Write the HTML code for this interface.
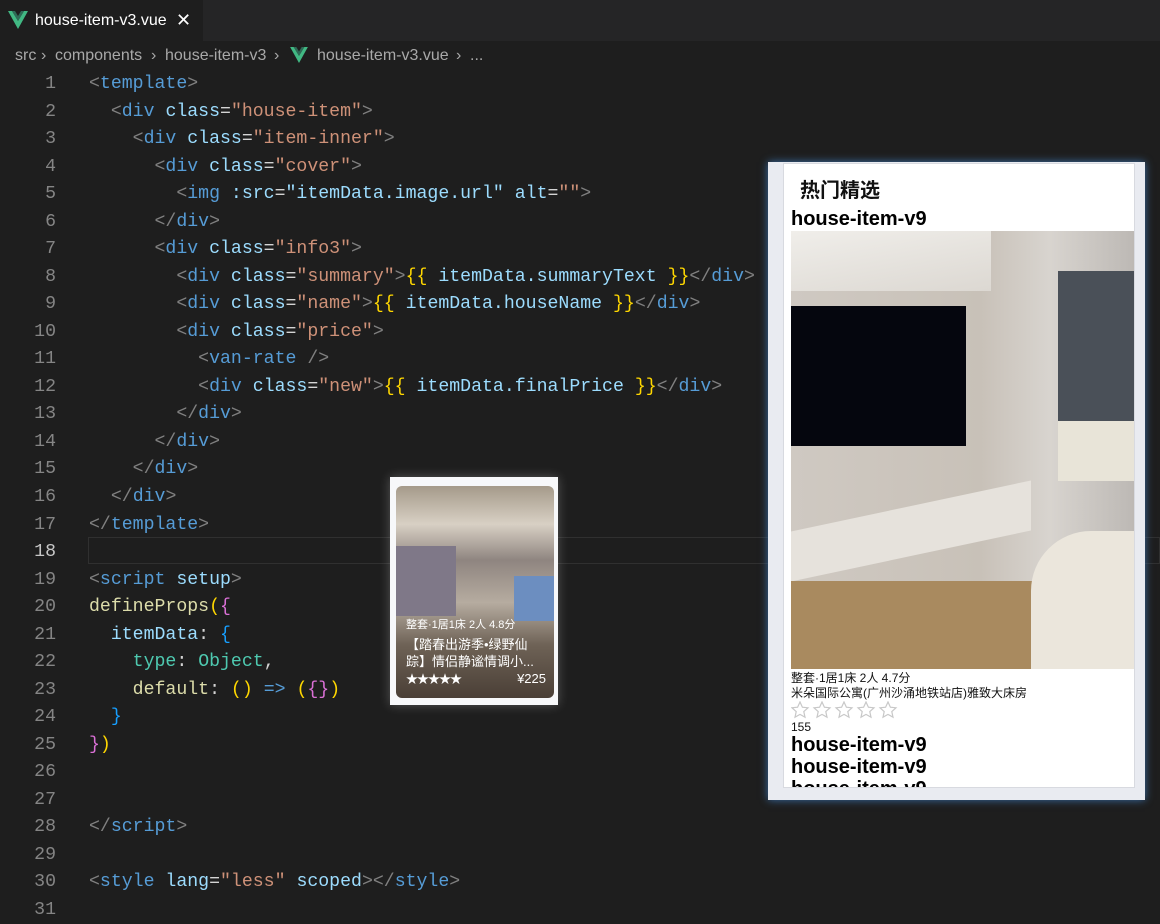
<!DOCTYPE html>
<html><head><meta charset="utf-8">
<style>
*{margin:0;padding:0;box-sizing:border-box}
body{width:1160px;height:918px;background:#1e1e1e;overflow:hidden;position:relative;font-family:"Liberation Sans","Noto Sans CJK SC",sans-serif}
.tabbar{position:absolute;left:0;top:0;width:1160px;height:41px;background:#252526}
.tab{position:absolute;left:0;top:0;width:203px;height:41px;background:#1e1e1e;color:#fff;font-size:16px;line-height:41px;padding-left:35px}
.cr{position:absolute;top:44px;color:#a9a9a9;font-size:16px;line-height:24px;white-space:pre}
.code{position:absolute;left:0;top:71px;font-family:"Liberation Mono",monospace;font-size:18.2px}
.ln{position:absolute;left:0;width:56px;text-align:right;color:#858585;height:27.53px;line-height:27.53px}
.cl{position:absolute;left:89px;white-space:pre;height:27.53px;line-height:27.53px;color:#d4d4d4}
.g{color:#808080}.t{color:#569cd6}.a{color:#9cdcfe}.s{color:#ce9178}.y{color:#ffd700}.f{color:#dcdcaa}.o{color:#4ec9b0}.p{color:#da70d6}.b{color:#179fff}
</style></head><body>
<div class="tabbar"><div class="tab">
<svg style="position:absolute;left:8px;top:11px" width="20" height="18" viewBox="0 0 20 18"><path d="M0 0h4l6 10 6-10h4L10 18z" fill="#41b883"/><path d="M4 0h3l3 5 3-5h3l-6 10z" fill="#2e6b57"/></svg>
house-item-v3.vue<span style="position:absolute;left:176px;top:0;font-size:18px">✕</span></div></div>
<span class="cr" style="left:15px">src</span><span class="cr" style="left:41px">›</span>
<span class="cr" style="left:55px">components</span><span class="cr" style="left:151px">›</span>
<span class="cr" style="left:165px">house-item-v3</span><span class="cr" style="left:274px">›</span>
<svg style="position:absolute;left:290px;top:47px" width="18" height="16" viewBox="0 0 20 18"><path d="M0 0h4l6 10 6-10h4L10 18z" fill="#41b883"/><path d="M4 0h3l3 5 3-5h3l-6 10z" fill="#2e6b57"/></svg>
<span class="cr" style="left:317px">house-item-v3.vue</span><span class="cr" style="left:456px">›</span><span class="cr" style="left:470px">...</span>
<div style="position:absolute;left:88px;top:537px;width:1072px;height:27px;border:1px solid #303030"></div>
<div class="code">
<div class="ln" style="top:0">1</div><div class="cl" style="top:0"><span class="g">&lt;</span><span class="t">template</span><span class="g">&gt;</span></div>
<div class="ln" style="top:27.5px">2</div><div class="cl" style="top:27.5px">  <span class="g">&lt;</span><span class="t">div</span> <span class="a">class</span>=<span class="s">"house-item"</span><span class="g">&gt;</span></div>
<div class="ln" style="top:55px">3</div><div class="cl" style="top:55px">    <span class="g">&lt;</span><span class="t">div</span> <span class="a">class</span>=<span class="s">"item-inner"</span><span class="g">&gt;</span></div>
<div class="ln" style="top:82.6px">4</div><div class="cl" style="top:82.6px">      <span class="g">&lt;</span><span class="t">div</span> <span class="a">class</span>=<span class="s">"cover"</span><span class="g">&gt;</span></div>
<div class="ln" style="top:110.1px">5</div><div class="cl" style="top:110.1px">        <span class="g">&lt;</span><span class="t">img</span> <span class="a">:src</span>=<span class="a">"itemData.image.url"</span> <span class="a">alt</span>=<span class="s">""</span><span class="g">&gt;</span></div>
<div class="ln" style="top:137.6px">6</div><div class="cl" style="top:137.6px">      <span class="g">&lt;/</span><span class="t">div</span><span class="g">&gt;</span></div>
<div class="ln" style="top:165.2px">7</div><div class="cl" style="top:165.2px">      <span class="g">&lt;</span><span class="t">div</span> <span class="a">class</span>=<span class="s">"info3"</span><span class="g">&gt;</span></div>
<div class="ln" style="top:192.7px">8</div><div class="cl" style="top:192.7px">        <span class="g">&lt;</span><span class="t">div</span> <span class="a">class</span>=<span class="s">"summary"</span><span class="g">&gt;</span><span class="y">{{</span> <span class="a">itemData.summaryText</span> <span class="y">}}</span><span class="g">&lt;/</span><span class="t">div</span><span class="g">&gt;</span></div>
<div class="ln" style="top:220.2px">9</div><div class="cl" style="top:220.2px">        <span class="g">&lt;</span><span class="t">div</span> <span class="a">class</span>=<span class="s">"name"</span><span class="g">&gt;</span><span class="y">{{</span> <span class="a">itemData.houseName</span> <span class="y">}}</span><span class="g">&lt;/</span><span class="t">div</span><span class="g">&gt;</span></div>
<div class="ln" style="top:247.8px">10</div><div class="cl" style="top:247.8px">        <span class="g">&lt;</span><span class="t">div</span> <span class="a">class</span>=<span class="s">"price"</span><span class="g">&gt;</span></div>
<div class="ln" style="top:275.3px">11</div><div class="cl" style="top:275.3px">          <span class="g">&lt;</span><span class="t">van-rate</span> <span class="g">/&gt;</span></div>
<div class="ln" style="top:302.8px">12</div><div class="cl" style="top:302.8px">          <span class="g">&lt;</span><span class="t">div</span> <span class="a">class</span>=<span class="s">"new"</span><span class="g">&gt;</span><span class="y">{{</span> <span class="a">itemData.finalPrice</span> <span class="y">}}</span><span class="g">&lt;/</span><span class="t">div</span><span class="g">&gt;</span></div>
<div class="ln" style="top:330.4px">13</div><div class="cl" style="top:330.4px">        <span class="g">&lt;/</span><span class="t">div</span><span class="g">&gt;</span></div>
<div class="ln" style="top:357.9px">14</div><div class="cl" style="top:357.9px">      <span class="g">&lt;/</span><span class="t">div</span><span class="g">&gt;</span></div>
<div class="ln" style="top:385.4px">15</div><div class="cl" style="top:385.4px">    <span class="g">&lt;/</span><span class="t">div</span><span class="g">&gt;</span></div>
<div class="ln" style="top:413px">16</div><div class="cl" style="top:413px">  <span class="g">&lt;/</span><span class="t">div</span><span class="g">&gt;</span></div>
<div class="ln" style="top:440.5px">17</div><div class="cl" style="top:440.5px"><span class="g">&lt;/</span><span class="t">template</span><span class="g">&gt;</span></div>
<div class="ln" style="top:468px;color:#c6c6c6">18</div>
<div class="ln" style="top:495.5px">19</div><div class="cl" style="top:495.5px"><span class="g">&lt;</span><span class="t">script</span> <span class="a">setup</span><span class="g">&gt;</span></div>
<div class="ln" style="top:523.1px">20</div><div class="cl" style="top:523.1px"><span class="f">defineProps</span><span class="y">(</span><span class="p">{</span></div>
<div class="ln" style="top:550.6px">21</div><div class="cl" style="top:550.6px">  <span class="a">itemData</span>: <span class="b">{</span></div>
<div class="ln" style="top:578.1px">22</div><div class="cl" style="top:578.1px">    <span style="color:#4ec9b0">type</span>: <span class="o">Object</span>,</div>
<div class="ln" style="top:605.7px">23</div><div class="cl" style="top:605.7px">    <span class="f">default</span>: <span class="y">()</span> <span class="t">=&gt;</span> <span class="y">(</span><span class="p">{}</span><span class="y">)</span></div>
<div class="ln" style="top:633.2px">24</div><div class="cl" style="top:633.2px">  <span class="b">}</span></div>
<div class="ln" style="top:660.7px">25</div><div class="cl" style="top:660.7px"><span class="p">}</span><span class="y">)</span></div>
<div class="ln" style="top:688.3px">26</div>
<div class="ln" style="top:715.8px">27</div>
<div class="ln" style="top:743.3px">28</div><div class="cl" style="top:743.3px"><span class="g">&lt;/</span><span class="t">script</span><span class="g">&gt;</span></div>
<div class="ln" style="top:770.9px">29</div>
<div class="ln" style="top:798.4px">30</div><div class="cl" style="top:798.4px"><span class="g">&lt;</span><span class="t">style</span> <span class="a">lang</span>=<span class="s">"less"</span> <span class="a">scoped</span><span class="g">&gt;&lt;/</span><span class="t">style</span><span class="g">&gt;</span></div>
<div class="ln" style="top:825.9px">31</div>
</div>

<!-- small card -->
<div style="position:absolute;left:390px;top:477px;width:168px;height:228px;background:#f7f8fa;box-shadow:0 0 10px rgba(255,255,255,.25)"></div>
<div style="position:absolute;left:396px;top:486px;width:158px;height:212px;border-radius:6px;overflow:hidden;background:linear-gradient(180deg,#a59a8a 0%,#d8d0c4 18%,#8f8580 35%,#b6aca0 55%,#6e6256 75%,#4a3f36 100%)">
<div style="position:absolute;left:0;top:60px;width:60px;height:70px;background:#7f7888"></div>
<div style="position:absolute;right:0;top:90px;width:40px;height:45px;background:#6c8ec0"></div>
<div style="position:absolute;left:10px;top:130px;color:#fff;font-size:11px">整套·1居1床 2人 4.8分</div>
<div style="position:absolute;left:10px;top:150px;width:140px;color:#fff;font-size:13px;line-height:17px">【踏春出游季•绿野仙踪】情侣静谧情调小...</div>
<div style="position:absolute;left:10px;top:184px;color:#fff;font-size:12px;letter-spacing:-1px">★★★★★</div>
<div style="position:absolute;right:8px;top:185px;color:#fff;font-size:13px">¥225</div>
</div>

<!-- right panel -->
<div style="position:absolute;left:768px;top:162px;width:377px;height:638px;background:#e9ebf1;box-shadow:0 0 8px #3a6ea8"></div>
<div style="position:absolute;left:783px;top:163px;width:352px;height:625px;background:#fff;border:1px solid #d8dae0;overflow:hidden">
<div style="position:absolute;left:16px;top:10px;font-size:20px;font-weight:bold;color:#111">热门精选</div>
<div style="position:absolute;left:7px;top:44px;font-size:20px;font-weight:bold;color:#000">house-item-v9</div>
<div style="position:absolute;left:7px;top:67px;width:345px;height:438px;background:linear-gradient(90deg,#cfc9c2 0%,#c8c1b8 55%,#d8d4cf 75%,#bcb8b4 100%)">
<div style="position:absolute;left:0;top:0;width:200px;height:60px;background:linear-gradient(170deg,#f0eeea,#dcd8d2)"></div>
<div style="position:absolute;left:0;top:75px;width:175px;height:140px;background:#05060e"></div>
<div style="position:absolute;left:267px;top:40px;width:78px;height:150px;background:#4a5058"></div>
<div style="position:absolute;left:267px;top:190px;width:78px;height:60px;background:#e8e4d8"></div>
<div style="position:absolute;left:0;top:275px;width:240px;height:50px;background:#e6e2dc;transform:skewY(-12deg)"></div>
<div style="position:absolute;left:0;top:350px;width:260px;height:88px;background:#a98a5f"></div>
<div style="position:absolute;left:240px;top:300px;width:105px;height:138px;background:#ebe6dc;border-radius:60px 0 0 0"></div>
</div>
<div style="position:absolute;left:7px;top:505px;font-size:12px;color:#111">整套·1居1床 2人 4.7分</div>
<div style="position:absolute;left:7px;top:520px;font-size:12px;color:#111">米朵国际公寓(广州沙涌地铁站店)雅致大床房</div>
<svg style="position:absolute;left:7px;top:537px" width="112" height="18" viewBox="0 0 112 18">
<g fill="none" stroke="#c8c8c8" stroke-width="1.2">
<path id="st" d="M9 1l2.4 5.2 5.6.6-4.2 3.8 1.2 5.6L9 13.4 4 16.2l1.2-5.6L1 6.8l5.6-.6z"/>
<use href="#st" x="22"/><use href="#st" x="44"/><use href="#st" x="66"/><use href="#st" x="88"/>
</g></svg>
<div style="position:absolute;left:7px;top:556px;font-size:12px;color:#111">155</div>
<div style="position:absolute;left:7px;top:570px;font-size:20px;font-weight:bold;color:#000;line-height:22px">house-item-v9<br>house-item-v9<br>house-item-v9</div>
</div>
</body></html>
